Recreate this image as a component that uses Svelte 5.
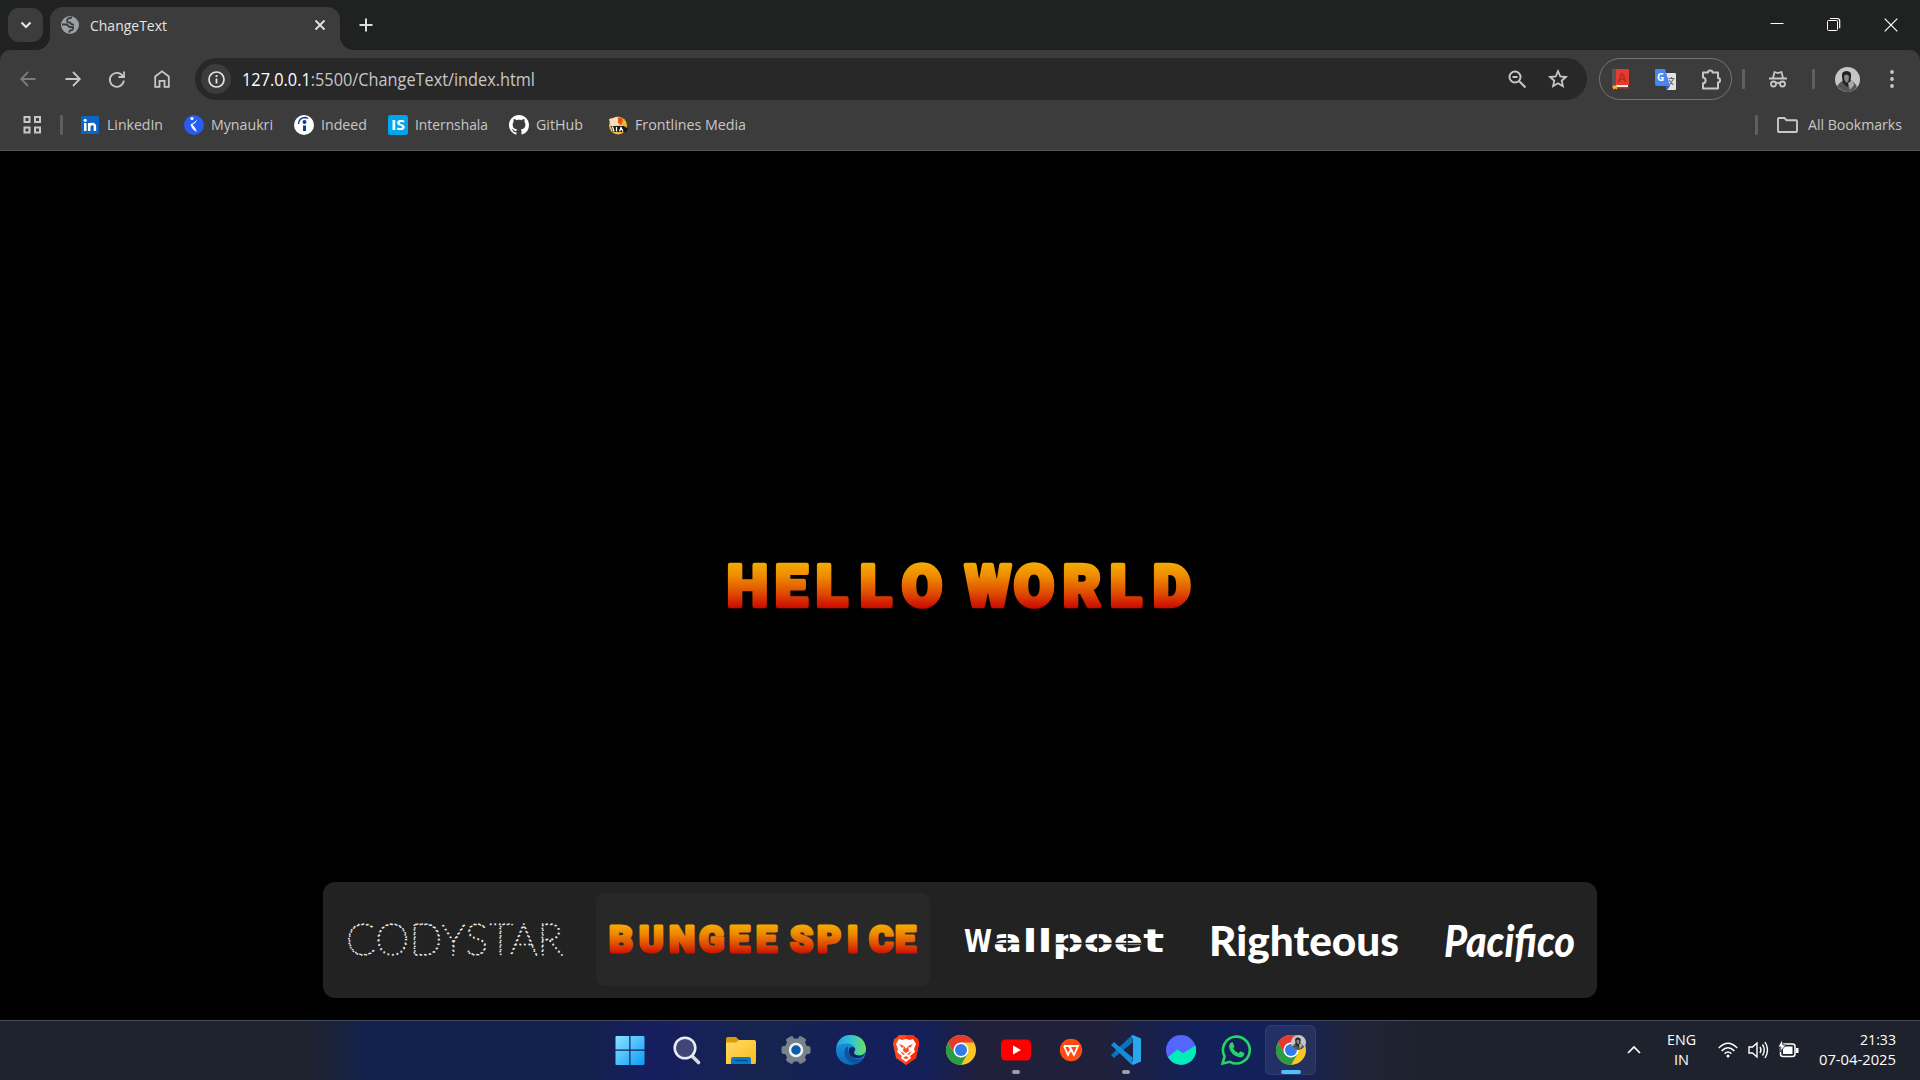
<script>
  const bookmarks = [
    { id: 'linkedin', label: 'LinkedIn', w: 56, gap: 21 },
    { id: 'naukri', label: 'Mynaukri', w: 62, gap: 21 },
    { id: 'indeed', label: 'Indeed', w: 46, gap: 21 },
    { id: 'is', label: 'Internshala', w: 73, gap: 21 },
    { id: 'github', label: 'GitHub', w: 47, gap: 25 },
    { id: 'front', label: 'Frontlines Media', w: 111, gap: 0 }
  ];
  const apps = ['start', 'search', 'files', 'settings', 'edge', 'brave', 'chrome', 'youtube', 'wps', 'vscode', 'growth', 'whatsapp', 'profile'];
  const running = ['youtube', 'vscode'];
</script>

{#snippet fit(text, w, size)}
  <svg class="fit" width={w} height="26" role="img"><text x="0" y="18" font-size={size} textLength={w} lengthAdjust="spacingAndGlyphs">{text}</text></svg>
{/snippet}

{#snippet face()}
  <circle cx="12.5" cy="12.5" r="12.5" fill="#c6c6c6" />
  <path d="M2 19q4-5 7-6l6 0q5 2 7 7-4 5-9.500 5Q6 24.500 2 19z" fill="#555" />
  <path d="M7 10q-1-6 4.500-6T16 10l-1 7-3 3-4-4z" fill="#222" />
  <path d="M9 9q2-3 5 0l-.5 5-2 2-2-3z" fill="#888" />
  <path d="M13 16l5-3 1 5-4 5z" fill="#aaa" />
{/snippet}

{#snippet chrome()}
  <circle cx="15" cy="15" r="15" fill="#f9c828" />
  <path d="M2 7.500A15 15 0 0 1 28 7.500H15L8.500 18.800z" fill="#e33b2e" />
  <path d="M2 7.500A15 15 0 0 0 15 30l6.500-11.200L15 22.500 8.500 18.800z" fill="#2b9b47" />
  <circle cx="15" cy="15" r="7.500" fill="#fff" />
  <circle cx="15" cy="15" r="6" fill="#2f7bea" />
{/snippet}

{#snippet bookmark(id)}
  <svg width="20" height="20" viewBox="0 0 20 20">
    {#if id === 'linkedin'}
      <rect x="1" y="1" width="18" height="18" rx="1" fill="#0a66c2" />
      <rect x="4" y="8" width="2.500" height="8" fill="#fff" /><circle cx="5.200" cy="5.300" r="1.600" fill="#fff" />
      <path d="M9.200 16V8M9.200 12q0-3 3-3t2.700 3v4" fill="none" stroke="#fff" stroke-width="2.500" />
    {:else if id === 'naukri'}
      <circle cx="10" cy="10" r="10" fill="#275df5" /><circle cx="8" cy="3.500" r="1.600" fill="#fff" />
      <path d="M13.500 4.500Q12 8 8.500 9.500q3 3 4.500 7.500-5-2-6.500-7.500Q10 8 13.500 4.500z" fill="#fff" />
    {:else if id === 'indeed'}
      <circle cx="10" cy="10" r="10" fill="#fff" /><circle cx="10.500" cy="7" r="2" fill="#123a8f" />
      <path d="M9 10.500h3V16H9z" fill="#123a8f" /><path d="M4.500 9Q5 3 10.500 2.500q2 0 3.500 1" fill="none" stroke="#123a8f" stroke-width="1.300" />
    {:else if id === 'is'}
      <rect width="20" height="20" rx="2.500" fill="#00a5ec" /><text class="bold" x="3" y="15" font-size="14.500" textLength="14" lengthAdjust="spacingAndGlyphs" fill="#fff">IS</text>
    {:else if id === 'github'}
      <path transform="scale(1.25)" fill="#fff" d="M8 0C3.580 0 0 3.580 0 8c0 3.540 2.290 6.530 5.470 7.590.4.070.55-.17.55-.38 0-.19-.01-.82-.01-1.490-2.010.37-2.530-.49-2.690-.94-.09-.23-.48-.94-.82-1.130-.28-.15-.68-.52-.01-.53.63-.01 1.080.58 1.230.82.72 1.210 1.870.87 2.330.66.070-.52.28-.87.51-1.070-1.780-.2-3.640-.89-3.640-3.950 0-.87.31-1.590.82-2.150-.08-.2-.36-1.020.08-2.120 0 0 .67-.21 2.200.82.64-.18 1.320-.27 2-.27s1.360.09 2 .27c1.530-1.040 2.200-.82 2.200-.82.44 1.100.16 1.920.08 2.120.51.56.82 1.270.82 2.150 0 3.070-1.870 3.750-3.650 3.950.29.25.54.73.54 1.480 0 1.070-.01 1.930-.01 2.200 0 .21.15.46.55.38A8.010 8.010 0 0 0 16 8c0-4.420-3.580-8-8-8z" />
    {:else}
      <circle cx="10" cy="10.500" r="9" fill="#f2b632" />
      <path d="M1 4l8-2 3 8-9 2z" fill="#f4dfbd" /><path d="M10 3l4-1 1 4-2 4-3-2z" fill="#e2541b" />
      <path d="M3 11l13 0 4 3-2 3H5z" fill="#171717" /><path d="M4.500 11.500l1.500 5M8.500 12v4.500M11.500 16.500l1.500-4 2 4" stroke="#fff" stroke-width="1.300" fill="none" />
    {/if}
  </svg>
{/snippet}

{#snippet app(id)}
  <svg class="app-icon" width="30" height="30" viewBox="0 0 30 30">
    {#if id === 'start'}
      <path d="M.5 2q0-1 1-1H14.300V14.500H.5zM15.500 1H28.500q1 0 1 1V14.500H15.500zM.5 15.700H14.300V30H1.500q-1 0-1-1zM15.500 15.700h14V29q0 1-1 1h-13z" fill="url(#win)" />
    {:else if id === 'search'}
      <path d="M21.500 21.500l6 6" stroke="#d5d9e0" stroke-width="3.600" stroke-linecap="round" /><circle cx="14" cy="13" r="10.300" fill="#3f4677" stroke="#e9edf2" stroke-width="2.500" />
    {:else if id === 'files'}
      <path d="M0 4q0-2 2-2h8l3 3v8H0z" fill="#dc9b08" /><path d="M0 7.500h10l3-2.500h15q2 0 2 2v20q0 2-1 2H0z" fill="url(#folder)" />
      <path d="M5 29v-5q0-2 2-2h16q2 0 2 2v5z" fill="#087bd1" /><path d="M9 25.500h12" stroke="#034d8c" stroke-width="1.500" stroke-linecap="round" />
    {:else if id === 'settings'}
      {#each [0, 60, 120] as a}<rect x="11" y="0.500" width="8" height="29" rx="2" fill="#79828a" transform="rotate({a + 30} 15 15)" />{/each}
      <circle cx="15" cy="15" r="11.500" fill="#79828a" /><circle cx="15" cy="15" r="6" fill="#0a5da8" stroke="#edf2f6" stroke-width="2.500" />
    {:else if id === 'edge'}
      <circle cx="15" cy="15" r="15" fill="url(#edgeb)" />
      <path d="M.3 12Q3 0 15 0q14 1 15 14-1 8-10 6-3-2-.5-5Q19 9 11 8.500 4 8.500.3 12z" fill="url(#edgeg)" />
      <path d="M12 11q-5 3-3 10 3 7 11 8 5-1 8-6-7 3-12-1-5-5-4-11z" fill="#0b559c" />
      <path d="M15 12q5 0 4 3-3 4 1 5 6 2 9-2-2 5-7 5-8 0-9-6-.5-4 2-5z" fill="#15205d" />
    {:else if id === 'brave'}
      <path d="M8 0h14l3 3 2 1 1 5-3 14-10 7L5 23 2 9l1-5 2-1z" fill="#fb4a1f" /><path d="M15 0h7l3 3 2 1 1 5-3 14-10 7z" fill="#ff2c0b" />
      <path d="M8 4l3 1 4-1 4 1 3-1 3 5-2 5 1 3-5 4 1 2-5 4-5-4 1-2-5-4 1-3-2-5z" fill="#fff" />
      <path d="M8 9l5 2-2 2zM22 9l-5 2 2 2zM13 11l-1 5 3 2 3-2-1-5-2 3zM9 16l3 4 2-1zM21 16l-3 4-2-1zM12 23l3-2 3 2-3 1z" fill="#fb4a1f" />
    {:else if id === 'chrome'}
      {@render chrome()}
    {:else if id === 'youtube'}
      <rect y="4.500" width="30" height="21" rx="4.500" fill="#f00" /><path d="M12 10.500v9l8-4.500z" fill="#fff" />
    {:else if id === 'wps'}
      <circle cx="15" cy="15" r="11.200" fill="#ff4b12" /><path d="M8 11h14l-4 9-3-6-3 6-4-9M13 11l5 9" fill="none" stroke="#fff" stroke-width="1.800" />
    {:else if id === 'vscode'}
      <path d="M22 7L3 23 0 20 20 1z" fill="#0873bd" /><path d="M3 7l19 16-2 6L0 10z" fill="#168bd8" /><path d="M22 0l8 3.500v23L22 30l-2-1 2-4V5l-2-4z" fill="#29a6ee" />
    {:else if id === 'growth'}
      <circle cx="15" cy="15" r="15" fill="#5367ff" /><path d="M2 22l9.500-7.500L17 18.200 29.500 10.500A15 15 0 0 1 2 22z" fill="#00edb8" />
    {:else if id === 'whatsapp'}
      <path d="M1.600 28.400l2-7A13.400 13.400 0 1 1 9 26.800z" fill="none" stroke="#27d267" stroke-width="2.600" />
      <path d="M9.500 8q1-1 2.300-.5l1.700 4-1.400 2q2 3.500 5.500 4.700l1.700-2 4 1.900q.4 4-4.300 4.400Q10 21 8 12q0-2.500 1.500-4z" fill="#27d267" />
    {:else}
      {@render chrome()}
      <g transform="translate(15 0) scale(.6)">{@render face()}</g>
    {/if}
  </svg>
{/snippet}

<svg class="defs" width="0" height="0">
  <defs>
    <linearGradient id="win" x1="0" y1="0" x2="1" y2="1"><stop stop-color="#8be3ff" /><stop offset="1" stop-color="#0a9cf5" /></linearGradient>
    <linearGradient id="folder" x1="0" y1="0" x2="1" y2="1"><stop stop-color="#ffda66" /><stop offset="1" stop-color="#fbbd1b" /></linearGradient>
    <linearGradient id="edgeb" x1="0" y1="0" x2="0" y2="1"><stop stop-color="#1c9fe0" /><stop offset="1" stop-color="#0a67bd" /></linearGradient>
    <linearGradient id="edgeg"><stop stop-color="#259fe2" /><stop offset=".5" stop-color="#32c3d6" /><stop offset="1" stop-color="#6ee35a" /></linearGradient>
  </defs>
</svg>

<div class="screen">
  <header class="tabs">
    <button class="chevron" aria-label="Search tabs"><svg width="14" height="14" viewBox="0 0 14 14"><path d="M2.500 4.500L7 9l4.500-4.500" fill="none" stroke="#e3e3e3" stroke-width="2.200" /></svg></button>
    <div class="tab">
      <svg width="18" height="18" viewBox="0 0 18 18"><circle cx="9" cy="9" r="9" fill="#9aa0a6" /><path d="M11 1.500Q6 2 6 5q.5 2 3 1.500 1.500 2.500 4 2M1 8.500h5l2.500 2.500h3.500q1 3-3 3.500l-1 2" fill="none" stroke="#3c3c3c" stroke-width="1.800" /></svg>
      <span class="tab-title">{@render fit('ChangeText', 77, 14.5)}</span>
      <svg class="tab-close" width="12" height="12" viewBox="0 0 12 12"><path d="M1.500 1.500l9 9m0-9l-9 9" stroke="#e3e3e3" stroke-width="1.800" /></svg>
    </div>
    <svg class="new-tab" width="14" height="14" viewBox="0 0 14 14"><path d="M7 .5v13M.5 7h13" stroke="#dcdcdc" stroke-width="2" /></svg>
    <div class="window-buttons">
      <svg width="14" height="14"><path d="M.5 5.500h13" stroke="#fff" /></svg>
      <svg width="14" height="14" fill="none" stroke="#fff"><rect x="0.5" y="2.500" width="10" height="10" rx="1" /><path d="M3 .5h7q2.700 0 2.700 2.700v7" stroke-width="1.200" /></svg>
      <svg width="14" height="14"><path d="M.7 .7l12.600 12.600m0-12.600L.7 13.300" stroke="#fff" stroke-width="1.200" /></svg>
    </div>
  </header>

  <div class="toolbar">
    <nav>
      <svg width="16" height="16" viewBox="0 0 16 16" fill="none" stroke="#7b7b7b" stroke-width="1.800"><path d="M15.500 8H1.500M8 1L1.200 8 8 15" /></svg>
      <svg width="16" height="16" viewBox="0 0 16 16" fill="none" stroke="#c7c7c7" stroke-width="1.800"><path d="M.5 8h14M8 1l6.800 7L8 15" /></svg>
      <svg width="16" height="16" viewBox="0 0 16 16" fill="none" stroke="#c7c7c7" stroke-width="1.800"><path d="M14 5.500A7 7 0 1 0 14.800 9.500M15 .5V6H9.500" /></svg>
      <svg width="16" height="18" viewBox="0 0 16 18" fill="none" stroke="#c7c7c7" stroke-width="1.800"><path d="M1.200 16.800V6.500L8 1.300l6.800 5.200v10.300h-4.300v-6h-5v6z" /></svg>
    </nav>
    <div class="omnibox">
      <span class="info"><svg width="17" height="17" viewBox="0 0 17 17"><circle cx="8.500" cy="8.500" r="7.500" fill="none" stroke="#e3e3e3" stroke-width="1.700" /><path d="M8.500 7.500v5M8.500 4v2" stroke="#e3e3e3" stroke-width="1.800" /></svg></span>
      <svg class="fit url" width="293" height="26"><text x="0" y="19.500" font-size="17.500" textLength="293" lengthAdjust="spacingAndGlyphs"><tspan fill="#fff">127.0.0.1</tspan><tspan>:5500/ChangeText/index.html</tspan></text></svg>
      <svg class="zoom" width="19" height="19" viewBox="0 0 19 19" fill="none" stroke="#c7c7c7" stroke-width="2"><circle cx="7" cy="7" r="5.500" /><path d="M11 11l6.500 6.500M4.500 7h5" /></svg>
      <svg width="20" height="20" viewBox="0 0 20 20"><path d="M10 2.200l2.300 5.300 5.600.5-4.200 3.700 1.200 5.500L10 14.300l-4.900 2.900 1.200-5.500L2.100 8l5.600-.5z" fill="none" stroke="#c7c7c7" stroke-width="1.800" /></svg>
    </div>
    <div class="extensions">
      <svg width="19" height="21" viewBox="0 0 19 21"><path d="M1 0h17v16H5v3H1z" fill="#e33c2e" /><path d="M1 0h4v17H1z" fill="#555" /><path d="M5 16h12v2H5z" fill="#eee" /><path d="M5 18h13v1.500H5z" fill="#c83024" /><path d="M2 16.500h4v4l-2-1-2 1z" fill="#f5b71b" /><text class="bold" x="6.500" y="13" font-size="13" fill="#bb2c24">A</text></svg>
      <svg width="21" height="21" viewBox="0 0 21 21"><path d="M9 4h11q1 0 1 1v15q0 1-1 1h-8z" fill="#e2e2e2" /><path d="M1 0h9l5 17H2q-2 0-2-2V1q0-1 1-1z" fill="#4986ee" /><path d="M11 17h4l-3 4z" fill="#3056c7" /><path d="M13.500 9.500h6M16.500 8v2M18.500 10l-4 6m-.5-5l4.500 5" fill="none" stroke="#667" stroke-width="1.100" /><text class="bold" x="2" y="12" font-size="10" fill="#fff">G</text></svg>
      <svg width="21" height="21" viewBox="0 0 21 21" fill="none" stroke="#c7c7c7" stroke-width="2"><path d="M2 3.500h5q0-2 2.300-2T11.500 3.500H17V9q2 0 2 2.200T17 13.500v6H2v-5.200q2.600-.4 2.600-2.900T2 8.500z" stroke-linejoin="round" /></svg>
    </div>
    <i class="rule r1"></i>
    <svg class="incognito" width="18" height="18" viewBox="0 0 18 18" fill="none" stroke="#c7c7c7" stroke-width="1.800"><path d="M0 8.500h18M4 8l1.500-6L9 3l3.500-1L14 8M7 13.500q2-1.500 4 0" /><circle cx="4.500" cy="14" r="2.500" /><circle cx="13.500" cy="14" r="2.500" /></svg>
    <i class="rule r2"></i>
    <svg class="avatar" width="25" height="25">{@render face()}</svg>
    <svg class="menu" width="4" height="18" fill="#c7c7c7"><circle cx="2" cy="2" r="1.900" /><circle cx="2" cy="9" r="1.900" /><circle cx="2" cy="16" r="1.900" /></svg>
  </div>

  <div class="bookmarks">
    <svg width="19" height="18" viewBox="0 0 19 18" fill="none" stroke="#c7c7c7" stroke-width="2"><path d="M1.500 1h5v5h-5zM12 1h5v5h-5zM1.500 11.500h5v5h-5zM12 11.500h5v5h-5z" /></svg>
    <i class="rule"></i>
    {#each bookmarks as b}
      <div class="bookmark" style:margin-right="{b.gap}px">{@render bookmark(b.id)}{@render fit(b.label, b.w, 14.5)}</div>
    {/each}
    <div class="all">
      <i class="rule"></i>
      <svg width="21" height="16" viewBox="0 0 21 16"><path d="M1 2q0-1 1-1h5.500l2 2.200H19q1 0 1 1V14q0 1-1 1H2q-1 0-1-1z" fill="none" stroke="#c7c7c7" stroke-width="1.900" /></svg>
      {@render fit('All Bookmarks', 94, 14.5)}
    </div>
  </div>

  <main>
    <svg class="headline" width="480" height="60">
      <defs><linearGradient id="fire" gradientUnits="userSpaceOnUse" x1="0" y1="6" x2="0" y2="53"><stop stop-color="#f5ad00" /><stop offset=".3" stop-color="#ee8c00" /><stop offset=".65" stop-color="#df4e00" /><stop offset="1" stop-color="#c80500" /></linearGradient></defs>
      <text class="spice" y="49.500" font-size="58" stroke-width="4.500" fill="url(#fire)" stroke="url(#fire)"><tspan x="7 55 96 140 182 225">HELLO </tspan><tspan x="245" textLength="46" lengthAdjust="spacingAndGlyphs">W</tspan><tspan x="294 343 390 433">ORLD</tspan></text>
    </svg>
    <section class="picker">
      <div class="choice c1"><svg width="218" height="50"><text class="codystar" x="1" y="40" font-size="44" textLength="217" lengthAdjust="spacingAndGlyphs">CODYSTAR</text></svg></div>
      <div class="choice c2"><svg width="310" height="50">
        <defs><linearGradient id="fire2" gradientUnits="userSpaceOnUse" x1="0" y1="9" x2="0" y2="40"><stop stop-color="#f5ad00" /><stop offset=".3" stop-color="#ee8c00" /><stop offset=".65" stop-color="#df4e00" /><stop offset="1" stop-color="#c80500" /></linearGradient></defs>
        <text class="spice" y="37" font-size="37" stroke-width="3" fill="url(#fire2)" stroke="url(#fire2)" x="1 31 61 91 121 148 174 182 209 239 261 287">BUNGEE SPICE</text>
      </svg></div>
      <div class="choice c3"><svg width="200" height="50">
        <text class="wall" y="37" font-size="32"><tspan x="0" textLength="28" lengthAdjust="spacingAndGlyphs">W</tspan><tspan x="29" textLength="171" lengthAdjust="spacingAndGlyphs">allpoet</tspan></text>
        <path d="M30 28.500h27M92 28.500h85M43 17v22M105 17v22M134 17v22M163 17v22" stroke="#222" stroke-width="1.500" />
      </svg></div>
      <div class="choice c4"><svg width="190" height="54"><text class="right" x="-1" y="43" font-size="41" textLength="190" lengthAdjust="spacingAndGlyphs">Righteous</text></svg></div>
      <div class="choice c5"><svg width="134" height="58"><text class="pacifico" x="0" y="46" font-size="44" textLength="131" lengthAdjust="spacingAndGlyphs">Pacifico</text></svg></div>
    </section>
  </main>

  <footer>
    <div class="apps">
      {#each apps as id}
        <div class="app {id}" class:active={id === 'profile'} class:running={running.includes(id)}>{@render app(id)}</div>
      {/each}
    </div>
    <div class="tray">
      <svg width="14" height="8" viewBox="0 0 14 8"><path d="M1 7l6-6 6 6" fill="none" stroke="#fff" stroke-width="1.700" /></svg>
      <div class="lang">{@render fit('ENG', 29, 14.5)}{@render fit('IN', 15, 14.5)}</div>
      <svg class="wifi" width="20" height="16" viewBox="0 0 20 16" fill="none" stroke="#fff" stroke-width="1.500"><path d="M.8 6Q10-3.500 19.200 6M3.700 8.900q6.300-6.300 12.600 0M6.600 11.700q3.400-3.300 6.800 0" /><circle cx="10" cy="14" r="1.500" fill="#fff" stroke="none" /></svg>
      <svg class="volume" width="21" height="18" viewBox="0 0 21 18" fill="none" stroke="#fff" stroke-width="1.400"><path d="M1 6h3.500L9 2v14l-4.500-4H1zM12 6q2 3 0 6M14.500 3.500q3.500 5.500 0 11M17 1q5 8 0 16" /></svg>
      <svg class="battery" width="21" height="18" viewBox="0 0 21 18"><rect x="2.500" y="3" width="14.500" height="12.500" rx="2.500" fill="none" stroke="#fff" stroke-width="1.500" /><path d="M5 5.500h9.500V13H5zM18 7h2.500v5H18z" fill="#fff" /><path d="M4-1L0 6h3l-1 5 6-7H5z" fill="#fff" stroke="#1e222e" stroke-width=".8" /></svg>
      <div class="clock">{@render fit('21:33', 36, 14.5)}{@render fit('07-04-2025', 77, 14.5)}</div>
    </div>
  </footer>
</div>

<style>
  :global(body) { background: #000; overflow: hidden; }
  * { box-sizing: border-box; }
  svg { display: block; flex: none; overflow: visible; }
  .defs { position: absolute; }
  .screen { width: 1920px; height: 1080px; display: flex; flex-direction: column; background: linear-gradient(#202221 0 70px, #000 70px); color: #c7c7c7; font-family: "Open Sans", "Noto Sans", sans-serif; }
  text { font-family: "Open Sans", "Noto Sans", sans-serif; }
  .fit text { fill: #c7c7c7; }
  .bold { font-weight: 700; }
  .tabs { height: 50px; flex: none; display: flex; align-items: center; background: #202221; }
  .chevron { width: 35px; height: 34px; margin-left: 8px; padding: 0; border: 0; border-radius: 11px; background: #3c3c3c; display: grid; place-items: center; }
  .tab { position: relative; width: 290px; height: 43px; margin: 7px 0 0 7px; padding: 0 14px 7px 11px; display: flex; align-items: center; border-radius: 13px 13px 0 0; background: #3c3c3c; }
  .tab::before, .tab::after { content: ''; position: absolute; bottom: 0; width: 13px; height: 13px; }
  .tab::before { left: -13px; background: radial-gradient(circle at 0 0, transparent 12.5px, #3c3c3c 13px); }
  .tab::after { right: -13px; background: radial-gradient(circle at 100% 0, transparent 12.5px, #3c3c3c 13px); }
  .tab-title { margin: 1px 0 0 11px; }
  .tab-title .fit text { fill: #e3e3e3; }
  .tab-close { margin-left: auto; }
  .new-tab { margin-left: 19px; }
  .window-buttons { display: flex; gap: 43px; margin: 0 22px 1px auto; }
  .toolbar { height: 50px; flex: none; display: flex; align-items: center; padding: 8px 26px 0 20px; background: #3c3c3c; border-radius: 10px 10px 0 0; }
  nav { display: flex; align-items: center; gap: 28.7px; width: 175px; }
  .omnibox { width: 1392px; height: 42px; border-radius: 21px; background: #282828; display: flex; align-items: center; padding: 0 19px 0 6px; }
  .info { width: 30px; height: 30px; border-radius: 50%; background: #3c3c3c; display: grid; place-items: center; }
  .url { margin-left: 11px; }
  .zoom { margin-left: auto; margin-right: 21px; }
  .extensions { width: 133px; height: 42px; margin-left: 12px; padding: 0 9px 0 11px; border: 1px solid #757575; border-radius: 21px; display: flex; align-items: center; justify-content: space-between; }
  .rule { display: block; flex: none; width: 3px; height: 20px; border-radius: 1px; background: #5f5f5f; }
  .r1 { margin-left: 10px; }
  .incognito { margin-left: 24px; }
  .r2 { margin-left: 25px; }
  .avatar { margin-left: 20px; }
  .menu { margin-left: auto; }
  .bookmarks { height: 51px; flex: none; display: flex; align-items: center; padding: 0 18px 0 23px; background: #3c3c3c; border-bottom: 1px solid #555; }
  .bookmarks > .rule { margin: 0 17px 0 18px; }
  .bookmark { display: flex; align-items: center; gap: 7px; }
  .bookmark .fit, .all .fit { margin-top: -1px; }
  .all { display: flex; align-items: center; margin-left: auto; }
  .all svg:not(.fit) { margin: 0 10px 0 19px; }
  main { height: 869px; flex: none; display: flex; flex-direction: column; align-items: center; justify-content: space-between; padding: 405px 0 22px; background: #000; }
  .spice { font-family: Roboto, sans-serif; font-weight: 900; stroke-linejoin: round; }
  .picker { width: 1274px; height: 116px; padding: 11px; display: flex; background: #222; border-radius: 12px; }
  .choice { height: 93px; border-radius: 8px; display: flex; align-items: center; justify-content: center; flex: none; }
  .c1 { width: 239px; }
  .c2 { width: 334px; margin-left: 23px; background: #282828; }
  .c3 { width: 222px; margin-left: 23px; }
  .c4 { width: 212px; margin-left: 24px; }
  .c5 { width: 154px; margin-left: 23px; }
  .codystar { font-family: Lato, sans-serif; font-weight: 100; fill: none; stroke: #eee; stroke-width: 1.7; stroke-linecap: round; stroke-dasharray: 0 4.6; }
  .wall { font-family: "DejaVu Sans", sans-serif; font-weight: 700; fill: #fff; }
  .right { font-family: Lato, sans-serif; font-weight: 900; fill: #fff; }
  .pacifico { font-family: Lato, cursive; font-weight: 900; font-style: italic; fill: #fff; }
  footer { height: 60px; flex: none; display: flex; align-items: center; justify-content: space-between; padding: 0 24px 2px 603px; border-top: 1px solid #444858; background: linear-gradient(90deg, #1e232d 0, #1e232f 310px, #13214e 370px, #13214e 590px, #171e60 650px, #15244e 760px, #141f5b 870px, #151f58 930px, #20203a 980px, #20203a 1100px, #12215a 1200px, #13215a 1290px, #202334 1360px, #1e222d 1430px, #1e222c 100%); }
  .apps { display: flex; }
  .app { position: relative; width: 55px; height: 50px; display: grid; place-items: center; }
  .start .app-icon { margin-left: -2px; }
  .search .app-icon { margin-left: 0; }
  .active::before { content: ''; position: absolute; inset: 0 2px; border-radius: 6px; background: #ffffff12; border: 1px solid #ffffff10; }
  .active::after, .running::after { content: ''; position: absolute; bottom: 1px; width: 8px; height: 4px; border-radius: 2px; background: #9a9dab; }
  .active::after { width: 20px; background: #4cc2ff; }
  .app-icon { position: relative; }
  .tray { display: flex; align-items: center; }
  .lang, .clock { display: flex; flex-direction: column; align-items: center; padding-bottom: 5px; }
  .lang { width: 29px; margin-left: 26px; }
  .lang .fit, .clock .fit { height: 20px; }
  .lang .fit text, .clock .fit text { fill: #fff; }
  .wifi { margin-left: 22px; }
  .volume { margin-left: 10px; }
  .battery { margin-left: 9px; }
  .clock { align-items: flex-end; margin-left: 20px; }
</style>
